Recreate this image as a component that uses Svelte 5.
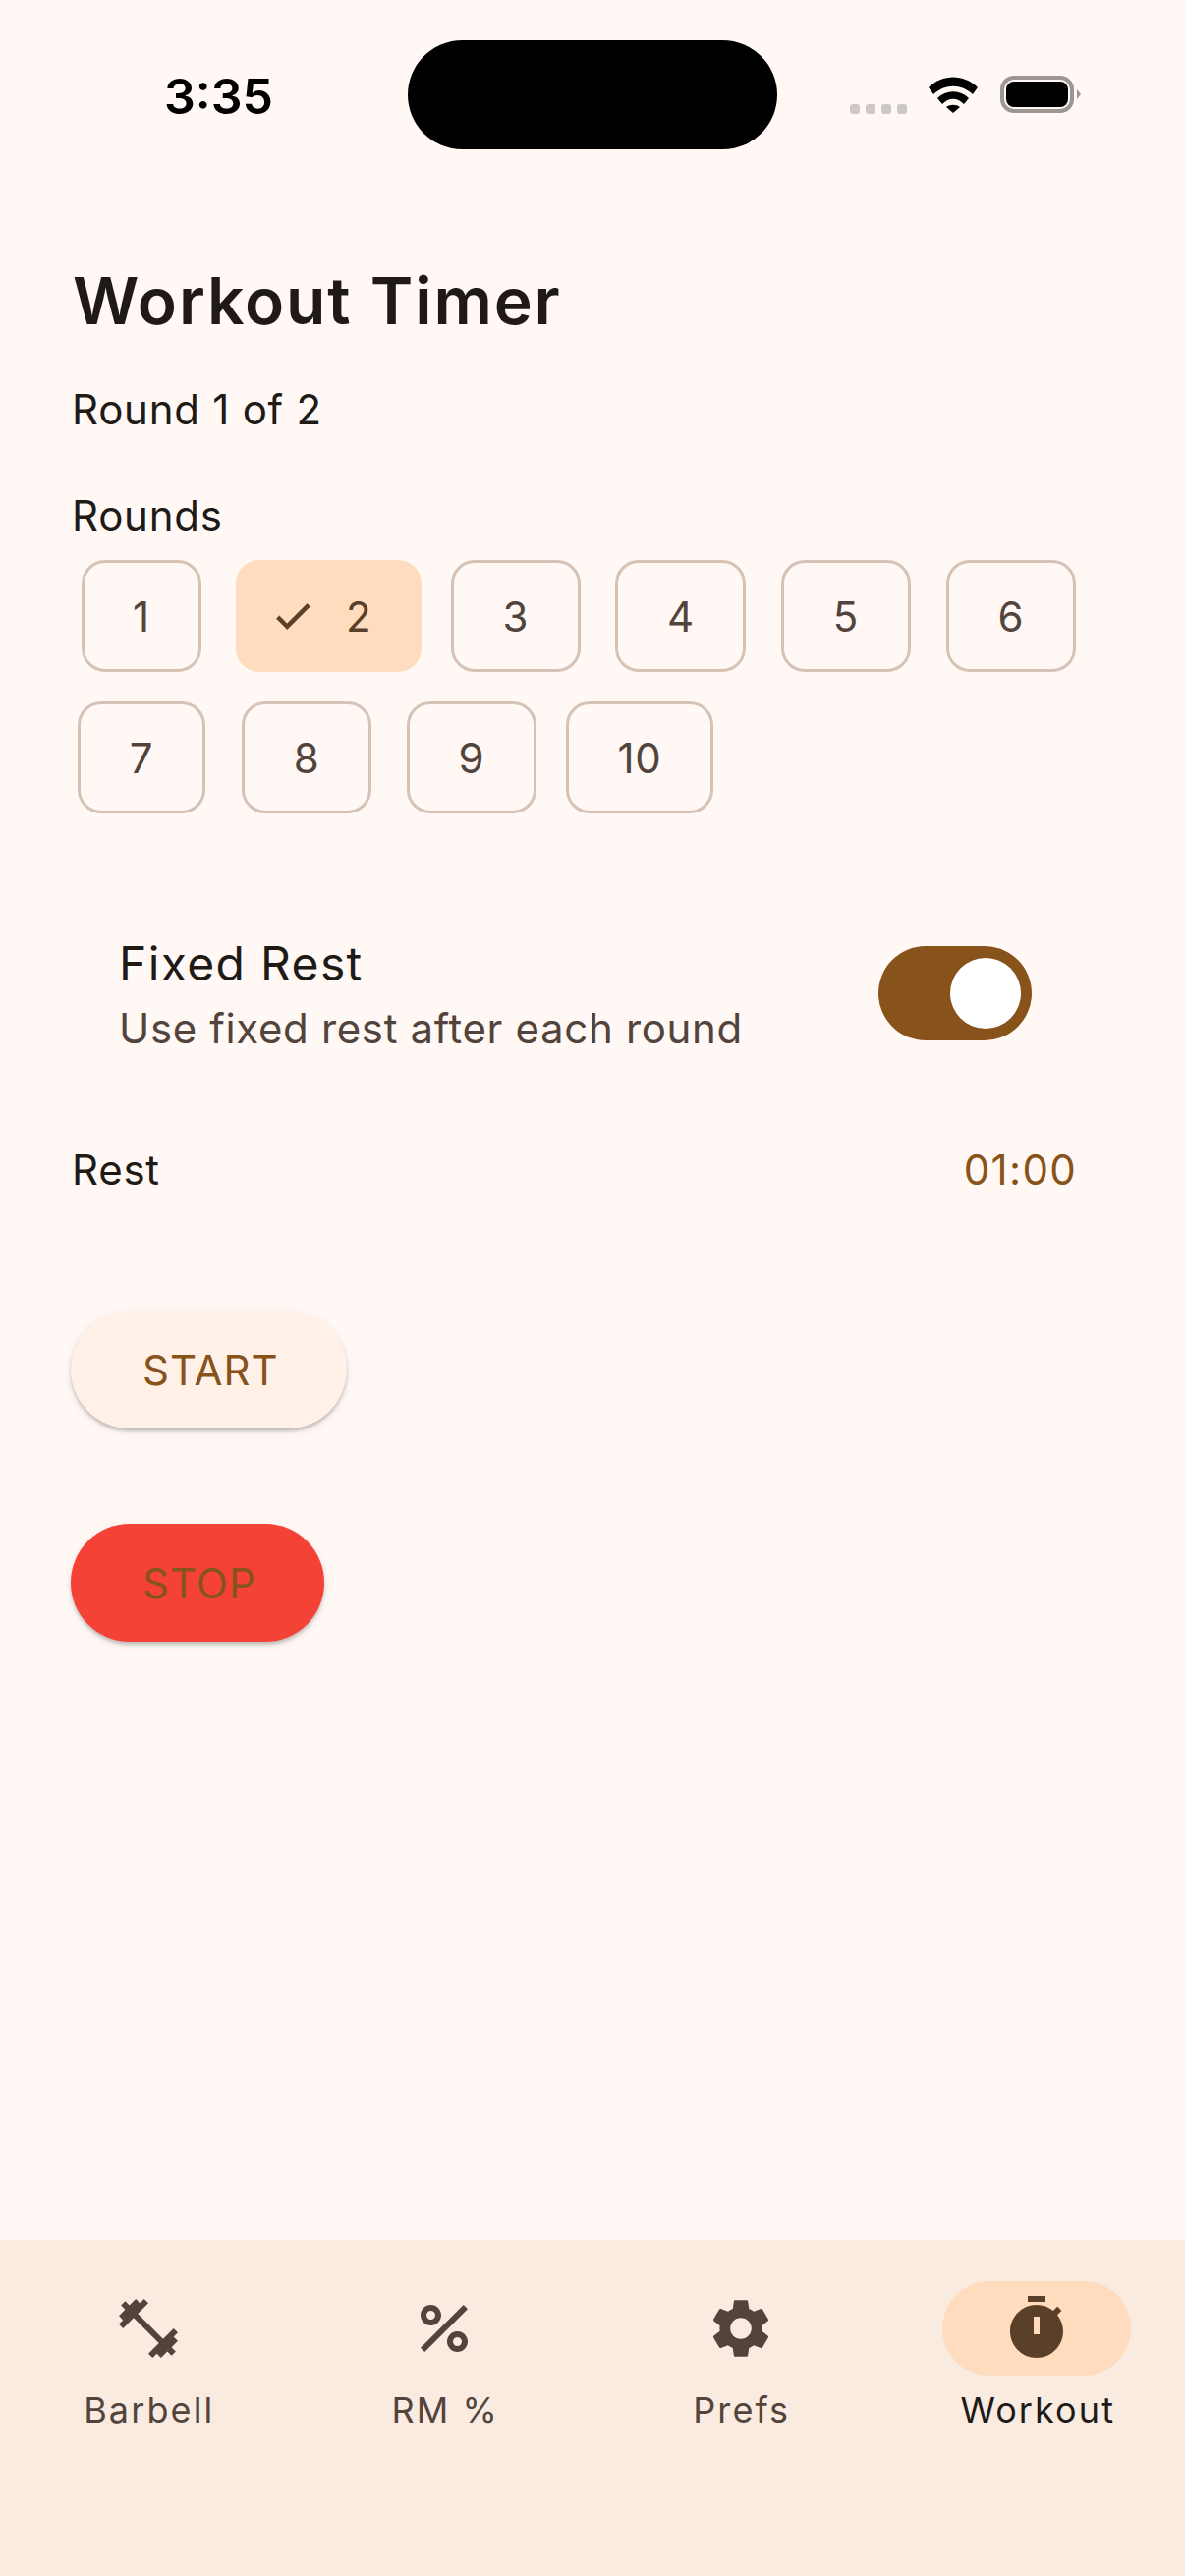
<script>
  const rounds = [1, 2, 3, 4, 5, 6, 7, 8, 9, 10];
  let selected = $state(2);
  let fixedRest = $state(true);
  let tab = $state("Workout");

  const tabs = [
    { label: "Barbell", d: "M20.57 14.86L22 13.43 20.57 12 17 15.57 8.43 7 12 3.43 10.57 2 9.14 3.43 7.71 2 5.57 4.14 4.14 2.71 2.71 4.14l1.43 1.43L2 7.71l1.43 1.43L2 10.57 3.43 12 7 8.43 15.57 17 12 20.57 13.43 22l1.43-1.43L16.29 22l2.14-2.14 1.43 1.43 1.43-1.43-1.43-1.43L22 16.29z" },
    { label: "RM %", d: "M7.5 11C9.43 11 11 9.43 11 7.5S9.43 4 7.5 4 4 5.57 4 7.5 5.57 11 7.5 11zm0-5C8.33 6 9 6.67 9 7.5S8.33 9 7.5 9 6 8.33 6 7.5 6.67 6 7.5 6zM4.0025 18.5832 18.5832 4.0025l1.4142 1.4142L5.4167 19.9974zM16.5 13c-1.93 0-3.5 1.57-3.5 3.5s1.57 3.5 3.5 3.5 3.5-1.57 3.5-3.5-1.57-3.5-3.5-3.5zm0 5c-.83 0-1.5-.67-1.5-1.5s.67-1.5 1.5-1.5 1.5.67 1.5 1.5-.67 1.5-1.5 1.5z" },
    { label: "Prefs", d: "M19.14 12.94c.04-.3.06-.61.06-.94 0-.32-.02-.64-.07-.94l2.03-1.58c.18-.14.23-.41.12-.61l-1.92-3.32c-.12-.22-.37-.29-.59-.22l-2.39.96c-.5-.38-1.03-.7-1.62-.94l-.36-2.54c-.04-.24-.24-.41-.48-.41h-3.84c-.24 0-.43.17-.47.41l-.36 2.54c-.59.24-1.13.57-1.62.94l-2.39-.96c-.22-.08-.47 0-.59.22L2.74 8.87c-.12.21-.08.47.12.61l2.03 1.58c-.05.3-.09.63-.09.94s.02.64.07.94l-2.03 1.58c-.18.14-.23.41-.12.61l1.92 3.32c.12.22.37.29.59.22l2.39-.96c.5.38 1.03.7 1.62.94l.36 2.54c.05.24.24.41.48.41h3.84c.24 0 .44-.17.47-.41l.36-2.54c.59-.24 1.13-.56 1.62-.94l2.39.96c.22.08.47 0 .59-.22l1.92-3.32c.12-.22.07-.47-.12-.61l-2.01-1.58zM12 15.6c-1.98 0-3.6-1.62-3.6-3.6s1.62-3.6 3.6-3.6 3.6 1.62 3.6 3.6-1.62 3.6-3.6 3.6z" },
    { label: "Workout", d: "M15 1H9v2h6V1zm-4 13h2V8h-2v6zm8.03-6.61l1.42-1.42c-.43-.51-.9-.99-1.41-1.41l-1.42 1.42C16.07 4.74 14.12 4 12 4c-4.97 0-9 4.03-9 9s4.02 9 9 9 9-4.03 9-9c0-2.12-.74-4.07-1.97-5.61z" }
  ];
</script>

<div class="screen">
  <header class="status">
    <div class="time">3:35</div>
    <div class="island"></div>
    <div class="indicators">
      <div class="dots"><i></i><i></i><i></i><i></i></div>
      <svg class="wifi" viewBox="0 0 50 37" width="50" height="37">
        <path d="M0 11C14-3 36-3 50 11l-5 7C33 7 17 7 5 18z" />
        <path d="M9 22C18 13 32 13 41 22l-5 6C29 21 21 21 14 28z" />
        <path d="M18 31c4-3 10-3 14 0l-7 6z" />
      </svg>
      <div class="battery"><div class="level"></div></div>
      <div class="nub"></div>
    </div>
  </header>

  <main>
    <h1>Workout Timer</h1>
    <p class="round">Round 1 of 2</p>
    <p class="rounds-label">Rounds</p>

    <div class="chips">
      {#each rounds as n}
        <div class="slot">
          <button class="chip" class:on={selected === n} onclick={() => (selected = n)}>
            {#if selected === n}
              <svg viewBox="0 0 24 24"><path d="M9 16.17 4.83 12l-1.42 1.41L9 19 21 7l-1.41-1.41z" /></svg>
            {/if}
            <span>{n}</span>
          </button>
        </div>
      {/each}
    </div>

    <div class="setting">
      <div class="setting-text">
        <div class="setting-title">Fixed Rest</div>
        <div class="setting-sub">Use fixed rest after each round</div>
      </div>
      <button class="switch" class:off={!fixedRest} aria-label="Fixed Rest" onclick={() => (fixedRest = !fixedRest)}>
        <span class="knob"></span>
      </button>
    </div>

    <div class="rest">
      <span>Rest</span>
      <span class="rest-value">01:00</span>
    </div>

    <button class="action start">START</button>
    <button class="action stop">STOP</button>
  </main>

  <nav>
    {#each tabs as t}
      <button class="tab" class:active={tab === t.label} onclick={() => (tab = t.label)}>
        <span class="pill">
          <svg viewBox="0 0 24 24" width="72" height="72"><path fill-rule="evenodd" d={t.d} /></svg>
        </span>
        <span class="tab-label">{t.label}</span>
      </button>
    {/each}
  </nav>
</div>

<style>
  :global(body) {
    margin: 0;
    background: #fff8f5;
  }

  .screen {
    min-height: 2622px;
    display: flex;
    flex-direction: column;
    background: #fff8f5;
    color: #201a17;
    font-family: Inter, "Liberation Sans", sans-serif;
  }

  button {
    font-family: inherit;
    border: none;
    padding: 0;
    cursor: pointer;
  }

  .status {
    display: grid;
    grid-template-columns: 415px 376px 1fr;
    padding-top: 41px;
    height: 111px;
  }
  .time {
    padding: 29px 0 0 167px;
    font-size: 50px;
    font-weight: 600;
    line-height: 56px;
    color: #000;
  }
  .island {
    height: 111px;
    background: #000;
    border-radius: 56px;
  }
  .indicators {
    display: flex;
    align-items: flex-start;
    padding: 37px 0 0 74px;
  }
  .dots {
    display: flex;
    gap: 6px;
    margin-top: 28px;
  }
  .dots i {
    width: 10px;
    height: 10px;
    border-radius: 3px;
    background: #cdc8c5;
  }
  .wifi {
    margin-left: 22px;
    fill: #000;
  }
  .battery {
    margin: -1px 0 0 23px;
    box-sizing: border-box;
    width: 75px;
    height: 38px;
    padding: 2px;
    border: 4px solid #9c9792;
    border-radius: 14px;
  }
  .level {
    height: 100%;
    background: #000;
    border-radius: 8px;
  }
  .nub {
    width: 0;
    height: 0;
    margin: 13px 0 0 3px;
    border-left: 4px solid #9c9792;
    border-top: 5px solid transparent;
    border-bottom: 5px solid transparent;
  }

  main {
    flex: 1;
    padding: 0 73px;
  }
  h1 {
    margin: 110px 0 0 1px;
    font-size: 66px;
    line-height: 88px;
    font-weight: 600;
    letter-spacing: 1.85px;
  }
  .round,
  .rounds-label {
    margin: 37px 0 0;
    font-size: 42px;
    line-height: 60px;
    letter-spacing: 0.75px;
  }
  .rounds-label {
    margin-top: 48px;
  }

  .chips {
    display: flex;
    flex-wrap: wrap;
    gap: 30px 24px;
    margin: 15px 0 0 -1px;
  }
  .slot {
    min-width: 144px;
    display: flex;
    justify-content: center;
  }
  .chip {
    box-sizing: border-box;
    height: 114px;
    display: flex;
    align-items: center;
    padding: 0 49.5px;
    background: transparent;
    border: 3px solid #d6c3b6;
    border-radius: 24px;
    color: #52443c;
    font-size: 42px;
    letter-spacing: 0.75px;
  }
  .chip.on {
    padding: 0 47.5px 0 32px;
    gap: 31px;
    background: #ffdcbe;
    border-color: #ffdcbe;
    color: #5b4029;
  }
  .chip svg {
    fill: #5b4029;
    stroke: #5b4029;
    stroke-width: 0.5;
    width: 46px;
    height: 46px;
  }

  .setting {
    display: flex;
    justify-content: space-between;
    align-items: flex-start;
    margin-top: 120px;
    padding: 0 83px 0 48px;
  }
  .setting-title {
    font-size: 48px;
    line-height: 66px;
    letter-spacing: 1.35px;
  }
  .setting-sub {
    font-size: 42px;
    line-height: 66px;
    letter-spacing: 0.65px;
    color: #52443c;
  }
  .switch {
    box-sizing: border-box;
    width: 156px;
    height: 96px;
    margin-top: 15px;
    display: flex;
    align-items: center;
    justify-content: flex-end;
    padding-right: 11px;
    background: #87531a;
    border-radius: 48px;
  }
  .knob {
    width: 72px;
    height: 72px;
    border-radius: 50%;
    background: #fff;
  }
  .switch.off {
    justify-content: flex-start;
    padding-left: 11px;
    background: #d6c3b6;
  }

  .rest {
    display: flex;
    justify-content: space-between;
    margin-top: 81px;
    padding-right: 37px;
    font-size: 42px;
    line-height: 60px;
    letter-spacing: 0.75px;
  }
  .rest-value {
    color: #87531a;
    letter-spacing: 1.3px;
  }

  .action {
    display: block;
    height: 120px;
    margin-left: -1px;
    padding: 0 69px 0 73px;
    border-radius: 60px;
    color: #87531a;
    font-size: 42px;
    font-weight: 400;
    letter-spacing: 1px;
    box-shadow: 0 3px 3px rgba(0, 0, 0, 0.16), 0 3px 9px rgba(0, 0, 0, 0.1);
  }
  .start {
    margin-top: 113px;
    background: #fff1e8;
  }
  .stop {
    margin-top: 97px;
    background: #f44336;
  }

  nav {
    height: 342px;
    box-sizing: border-box;
    display: grid;
    grid-template-columns: repeat(4, 1fr);
    padding-top: 42px;
    background: #f9ebe0;
  }
  .tab {
    display: flex;
    flex-direction: column;
    align-items: center;
    background: transparent;
    color: #52443c;
    height: fit-content;
  }
  .pill {
    width: 192px;
    height: 96px;
    border-radius: 48px;
    display: flex;
    align-items: center;
    justify-content: center;
  }
  .pill svg {
    fill: #52443c;
  }
  .tab.active .pill {
    background: #ffdcbe;
  }
  .tab.active .pill svg {
    fill: #5b4029;
  }
  .tab-label {
    margin-top: 10px;
    padding-left: 2px;
    font-size: 36px;
    line-height: 50px;
    font-weight: 400;
    letter-spacing: 2.1px;
  }
  .tab.active .tab-label {
    color: #201a17;
  }
</style>
